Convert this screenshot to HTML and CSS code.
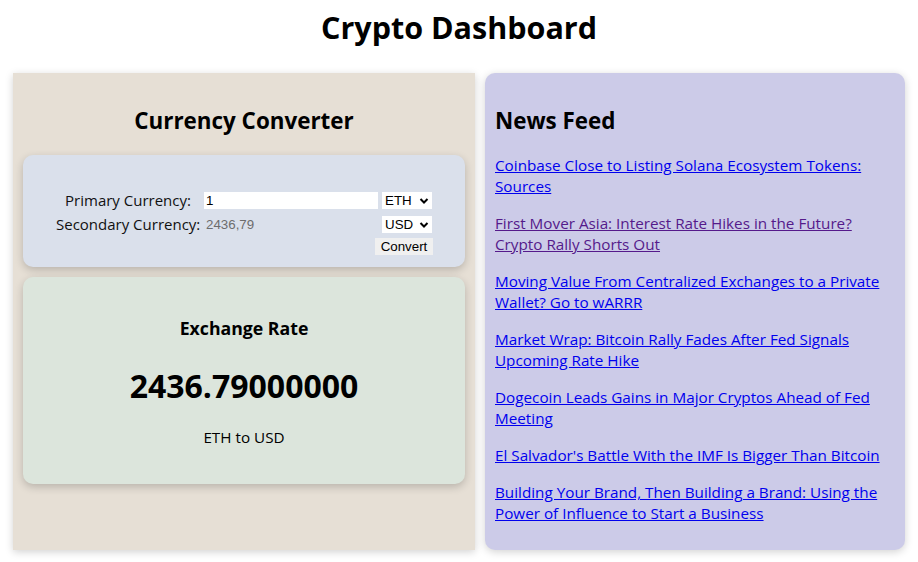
FILE: index.html
```html
<!DOCTYPE html>
<html lang="en">
<head>
<meta charset="utf-8">
<title>Crypto Dashboard</title>
<link rel="stylesheet" href="styles.css">
</head>
<body>
<h1 class="title">Crypto Dashboard</h1>
<div class="app">
  <div class="left">
    <h2 class="section-title center">Currency Converter</h2>
    <div class="card converter">
      <div class="form">
        <label class="lbl">Primary Currency:</label>
        <input class="amount" type="text" value="1">
        <span class="sel"><select><option>ETH</option></select><svg class="chev" viewBox="0 0 10 10" width="10" height="10"><path d="M1.5 3 L5 6.5 L8.5 3" fill="none" stroke="#000" stroke-width="2"/></svg></span>
        <label class="lbl">Secondary Currency:</label>
        <input class="amount result" type="text" value="2436,79" disabled>
        <span class="sel"><select><option>USD</option></select><svg class="chev" viewBox="0 0 10 10" width="10" height="10"><path d="M1.5 3 L5 6.5 L8.5 3" fill="none" stroke="#000" stroke-width="2"/></svg></span>
        <button class="btn">Convert</button>
      </div>
    </div>
    <div class="card rate">
      <h3 class="rate-title">Exchange Rate</h3>
      <div class="rate-value">2436.79000000</div>
      <p class="rate-pair">ETH to USD</p>
    </div>
  </div>
  <div class="right">
    <h2 class="section-title">News Feed</h2>
    <p class="news"><a href="#a" class="link">Coinbase Close to Listing Solana Ecosystem Tokens: Sources</a></p>
    <p class="news"><a href="#b" class="link visited">First Mover Asia: Interest Rate Hikes in the Future? Crypto Rally Shorts Out</a></p>
    <p class="news"><a href="#c" class="link">Moving Value From Centralized Exchanges to a Private Wallet? Go to wARRR</a></p>
    <p class="news"><a href="#d" class="link">Market Wrap: Bitcoin Rally Fades After Fed Signals Upcoming Rate Hike</a></p>
    <p class="news"><a href="#e" class="link">Dogecoin Leads Gains in Major Cryptos Ahead of Fed Meeting</a></p>
    <p class="news"><a href="#f" class="link">El Salvador's Battle With the IMF Is Bigger Than Bitcoin</a></p>
    <p class="news"><a href="#g" class="link">Building Your Brand, Then Building a Brand: Using the Power of Influence to Start a Business</a></p>
  </div>
</div>
</body>
</html>
```
FILE: styles.css
```css
* { box-sizing: border-box; }
body {
  margin: 0;
  font-family: "Open Sans", "Noto Sans", sans-serif;
  font-size: 15.25px;
  color: #000;
  background: #fff;
}
.title {
  margin: 8px 0 0;
  font-size: 30.5px;
  line-height: 38px;
  font-weight: 700;
  text-align: center;
}
.app {
  display: flex;
  gap: 10px;
  margin: 27px 13px 13px;
  align-items: stretch;
}
.left {
  width: 462px;
  background: #e6dfd5;
  padding: 10px;
  box-shadow: 0 2px 8px rgba(0,0,0,0.18);
}
.right {
  width: 420px;
  background: #cccbe8;
  padding: 10px 10px 10px;
  border-radius: 10px;
  box-shadow: 0 2px 8px rgba(0,0,0,0.18);
}
.section-title {
  margin: 22px 0 18px;
  font-size: 22.4px;
  line-height: 32px;
  font-weight: 700;
}
.center { text-align: center; }
.card {
  border-radius: 10px;
  box-shadow: 0 3px 8px rgba(0,0,0,0.2);
}
.converter {
  background: #dae0eb;
  padding: 35px 10px 12px;
  display: flex;
  justify-content: center;
}
.form {
  display: grid;
  grid-template-columns: 144px 174px 50px;
  grid-template-rows: 20px 20px 17px;
  column-gap: 4px;
  row-gap: 4px;
}
.form .btn { grid-column: 1 / -1; justify-self: end; align-self: start; margin-right: -1px; }
.lbl {
  text-align: center;
  font-size: 15px;
  line-height: 20px;
  white-space: nowrap;
  color: #111;
}
.amount {
  align-self: center;
  height: 17px;
  border: 0;
  padding: 0 2px;
  background: #fff;
  font-family: "Liberation Sans", Arial, sans-serif;
  font-size: 13.33px;
  color: #000;
  outline: none;
}
.amount.result {
  background: transparent;
  color: #6d6d6d;
}
.sel {
  position: relative;
  display: flex;
  align-self: center;
  height: 17px;
}
.sel select {
  appearance: none;
  -webkit-appearance: none;
  display: block;
  width: 50px;
  height: 17px;
  border: 0;
  border-radius: 0;
  background: #fff;
  padding: 0 0 0 3px;
  font-family: "Liberation Sans", Arial, sans-serif;
  font-size: 13.33px;
  color: #000;
  line-height: 17px;
}
.chev {
  position: absolute;
  right: 3px;
  top: 4px;
  pointer-events: none;
}
.btn {
  width: 58px;
  height: 17px;
  border: 0;
  padding: 0;
  background: #f0f0f0;
  font-family: "Liberation Sans", Arial, sans-serif;
  font-size: 13.33px;
  color: #000;
  line-height: 17px;
}
.rate {
  margin-top: 10px;
  background: #dce5dc;
  padding: 20px;
  text-align: center;
}
.rate-title {
  margin: 19px 0 0;
  font-size: 17.7px;
  line-height: 25px;
  font-weight: 700;
}
.rate-value {
  margin: 24px 0 0;
  font-size: 32px;
  line-height: 42px;
  font-weight: 700;
}
.rate-pair {
  margin: 20px 0 16px;
  line-height: 21px;
}
.news {
  margin: 16px 0;
  line-height: 21px;
}
.section-title + .news { margin-top: 0; }
.link { color: #0000ee; text-decoration: underline; }
.link.visited { color: #551a8b; }
```
